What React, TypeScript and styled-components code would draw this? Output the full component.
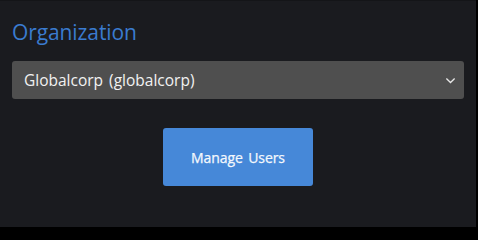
import React, { useState } from 'react';
import styled, { createGlobalStyle } from 'styled-components';

const GlobalStyle = createGlobalStyle`
  html, body {
    margin: 0;
    padding: 0;
    background: #000000;
  }
  * {
    box-sizing: border-box;
  }
`;

const Panel = styled.div`
  width: 476px;
  height: 227px;
  background: #1a1b1f;
  border-top: 1px solid #141518;
  padding: 17px 12px 0;
  font-family: 'Open Sans', 'Noto Sans', sans-serif;
  display: flex;
  flex-direction: column;
`;

const Title = styled.h2`
  margin: 0;
  font-size: 21px;
  font-weight: 400;
  line-height: 29px;
  color: #3a7bd0;
  letter-spacing: -0.1px;
`;

const SelectBox = styled.div`
  position: relative;
  margin-top: 14px;
  height: 38px;
  border-radius: 3px;
  background: #4f4f4f;
  display: flex;
  align-items: center;
  justify-content: space-between;
  padding: 0 8px 0 12px;
  cursor: pointer;
  color: #f2f2f2;
  font-size: 15.5px;
  span {
    word-spacing: 2px;
  }
`;

const Chevron = styled.svg`
  width: 11px;
  height: 11px;
`;

const Actions = styled.div`
  display: flex;
  justify-content: center;
  margin-top: 29px;
`;

const Button = styled.button`
  width: 150px;
  height: 58px;
  border: none;
  border-radius: 3px;
  background: #4688d8;
  color: #f4f8fd;
  font-family: inherit;
  font-size: 14px;
  font-weight: 500;
  letter-spacing: -0.1px;
  word-spacing: 2px;
  cursor: pointer;
  -webkit-text-stroke: 0.25px #f4f8fd;
`;

const App = () => {
  const [org] = useState('Globalcorp (globalcorp)');

  return (
    <>
      <GlobalStyle />
      <Panel>
        <Title>Organization</Title>
        <SelectBox>
          <span>{org}</span>
          <Chevron viewBox="0 0 12 12" fill="none">
            <path d="M1.5 3.8 L6 8.2 L10.5 3.8" stroke="#e8e8e8" strokeWidth="1.4" />
          </Chevron>
        </SelectBox>
        <Actions>
          <Button>Manage Users</Button>
        </Actions>
      </Panel>
    </>
  );
};

export default App;
